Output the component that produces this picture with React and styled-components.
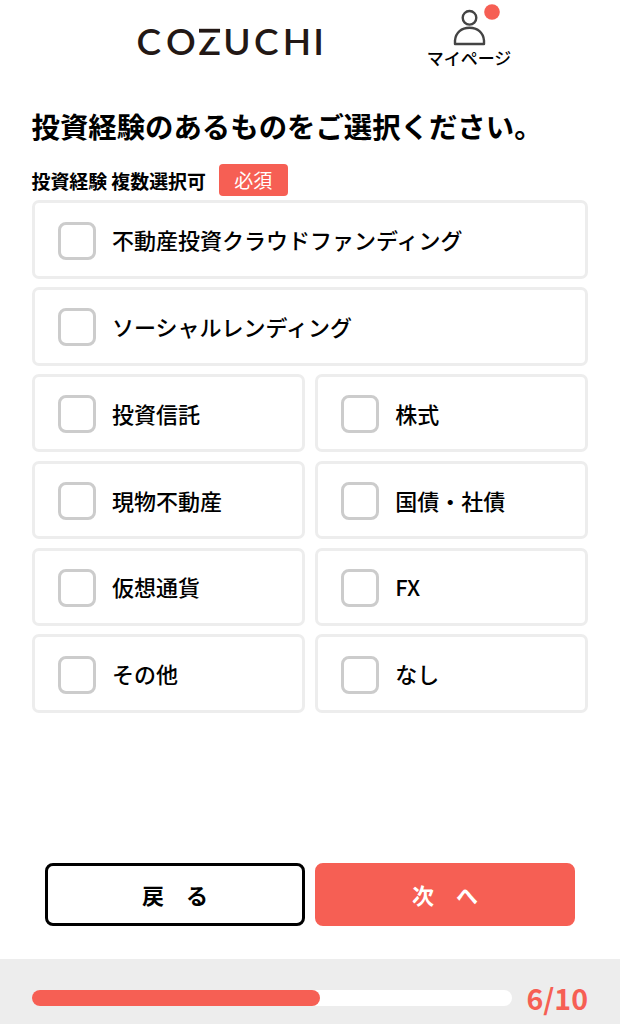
import React, { useState } from 'react';
import styled, { createGlobalStyle } from 'styled-components';

const GlobalStyle = createGlobalStyle`
  * {
    box-sizing: border-box;
  }

  body {
    margin: 0;
    background: #fff;
    color: #000;
    font-family: 'Noto Sans CJK JP', 'Noto Sans', sans-serif;
  }
`;

const Page = styled.div`
  display: flex;
  flex-direction: column;
  height: 1024px;
  overflow: hidden;
`;

const Header = styled.header`
  display: flex;
  align-items: flex-start;
  height: 84px;
  padding-left: 130px;
`;

const LogoSvg = styled.svg`
  width: 200px;
  height: 84px;
  font-family: Lato, sans-serif;
  font-size: 37px;
  font-weight: 600;
  fill: #231815;
`;

const MyPage = styled.a`
  display: flex;
  flex-direction: column;
  align-items: center;
  width: 90px;
  margin-left: 94px;
  padding-top: 3px;
  color: inherit;
  font-size: 17px;
  font-weight: 500;
  line-height: 20px;
  white-space: nowrap;
`;

const Main = styled.main`
  flex: 1;
  padding: 21px 32px 0 31.5px;
`;

const Title = styled.h1`
  margin: 0;
  font-size: 28.4px;
  font-weight: 700;
  line-height: 41px;
  white-space: nowrap;
`;

const FieldLabel = styled.div`
  display: flex;
  align-items: center;
  height: 32px;
  margin-top: 18px;
  font-size: 18.9px;
  font-weight: 700;
  white-space: nowrap;
`;

const Required = styled.span`
  width: 69px;
  height: 32px;
  margin-left: 13px;
  border-radius: 4px;
  background: #f65f54;
  color: #fff;
  font-size: 19px;
  font-weight: 400;
  line-height: 32px;
  text-align: center;
`;

const Options = styled.div`
  display: grid;
  grid-template-columns: 1fr 1fr;
  gap: 8.3px 10px;
  margin-top: 4.4px;
`;

const Option = styled.label`
  display: flex;
  align-items: center;
  grid-column: ${({ $wide }) => ($wide ? 'span 2' : 'auto')};
  height: 78.5px;
  padding-bottom: 1px;
  padding-left: 23.5px;
  border: 3px solid #ededed;
  border-radius: 7px;
  font-size: 22px;
  font-weight: 500;
  cursor: pointer;
`;

const Checkbox = styled.input.attrs({ type: 'checkbox' })`
  appearance: none;
  width: 38px;
  height: 38px;
  margin: 3px 16px 0 0;
  border: 3px solid #ccc;
  border-radius: 8px;
  background: #fff;

  &:checked {
    border-color: #f65f54;
    background: #f65f54;
  }
`;

const Actions = styled.div`
  display: flex;
  gap: 10px;
  padding: 0 45px 33px;
`;

const Button = styled.button`
  flex: 1;
  height: 63px;
  padding: 0 0 2px;
  border: 3px solid ${({ $primary }) => ($primary ? '#f65f54' : '#000')};
  border-radius: 8px;
  background: ${({ $primary }) => ($primary ? '#f65f54' : '#fff')};
  color: ${({ $primary }) => ($primary ? '#fff' : '#000')};
  font-family: inherit;
  font-size: 22px;
  font-weight: 700;
`;

const Footer = styled.footer`
  display: flex;
  align-items: center;
  height: 65px;
  padding: 12px 32px 0;
  background: #ededed;
`;

const Track = styled.div`
  width: 480px;
  height: 16px;
  border-radius: 8px;
  background: #fff;
`;

const Fill = styled.div`
  height: 16px;
  border-radius: 8px;
  background: #f65f54;
`;

const Count = styled.span`
  margin-left: 15px;
  color: #f65f54;
  font-size: 28.5px;
  font-weight: 700;
  line-height: 40px;
`;

const OPTIONS = [
  { label: '不動産投資クラウドファンディング', wide: true },
  { label: 'ソーシャルレンディング', wide: true },
  { label: '投資信託' },
  { label: '株式' },
  { label: '現物不動産' },
  { label: '国債・社債' },
  { label: '仮想通貨' },
  { label: 'FX' },
  { label: 'その他' },
  { label: 'なし' },
];

const STEP = 6;
const TOTAL = 10;

const Logo = () => (
  <LogoSvg viewBox="0 0 200 84" textAnchor="middle">
    <text x="18.7 50.8 79.7 107 136.3 167 188.5" y="55">
      COZUCHI
    </text>
    {/* the bar of the Z floats above its diagonal */}
    <rect x="68" y="32" width="24" height="5" fill="#fff" />
    <rect x="69" y="28.8" width="21" height="3.8" />
  </LogoSvg>
);

const PersonIcon = () => (
  <svg width="90" height="45" viewBox="0 0 90 45" fill="none">
    <g stroke="#444" strokeWidth="2.4" strokeLinejoin="round">
      <circle cx="45.5" cy="14.8" r="6.8" />
      <path d="M31 41V37.5C31.7 29.5 37.5 24.8 45.5 24.8S59.3 29.5 60 37.5V41Z" />
    </g>
    <circle cx="68" cy="9" r="7.8" fill="#f65f54" />
  </svg>
);

const App = () => {
  const [checked, setChecked] = useState([]);

  const toggle = label =>
    setChecked(
      checked.includes(label)
        ? checked.filter(l => l !== label)
        : [...checked, label]
    );

  return (
    <Page>
      <GlobalStyle />
      <Header>
        <Logo />
        <MyPage>
          <PersonIcon />
          マイページ
        </MyPage>
      </Header>
      <Main>
        <Title>投資経験のあるものをご選択ください。</Title>
        <FieldLabel>
          投資経験 複数選択可
          <Required>必須</Required>
        </FieldLabel>
        <Options>
          {OPTIONS.map(({ label, wide }) => (
            <Option key={label} $wide={wide}>
              <Checkbox
                checked={checked.includes(label)}
                onChange={() => toggle(label)}
              />
              {label}
            </Option>
          ))}
        </Options>
      </Main>
      <Actions>
        <Button>戻　る</Button>
        <Button $primary>次　へ</Button>
      </Actions>
      <Footer>
        <Track>
          <Fill style={{ width: `${(STEP / TOTAL) * 100}%` }} />
        </Track>
        <Count>
          {STEP}/{TOTAL}
        </Count>
      </Footer>
    </Page>
  );
};

export default App;
